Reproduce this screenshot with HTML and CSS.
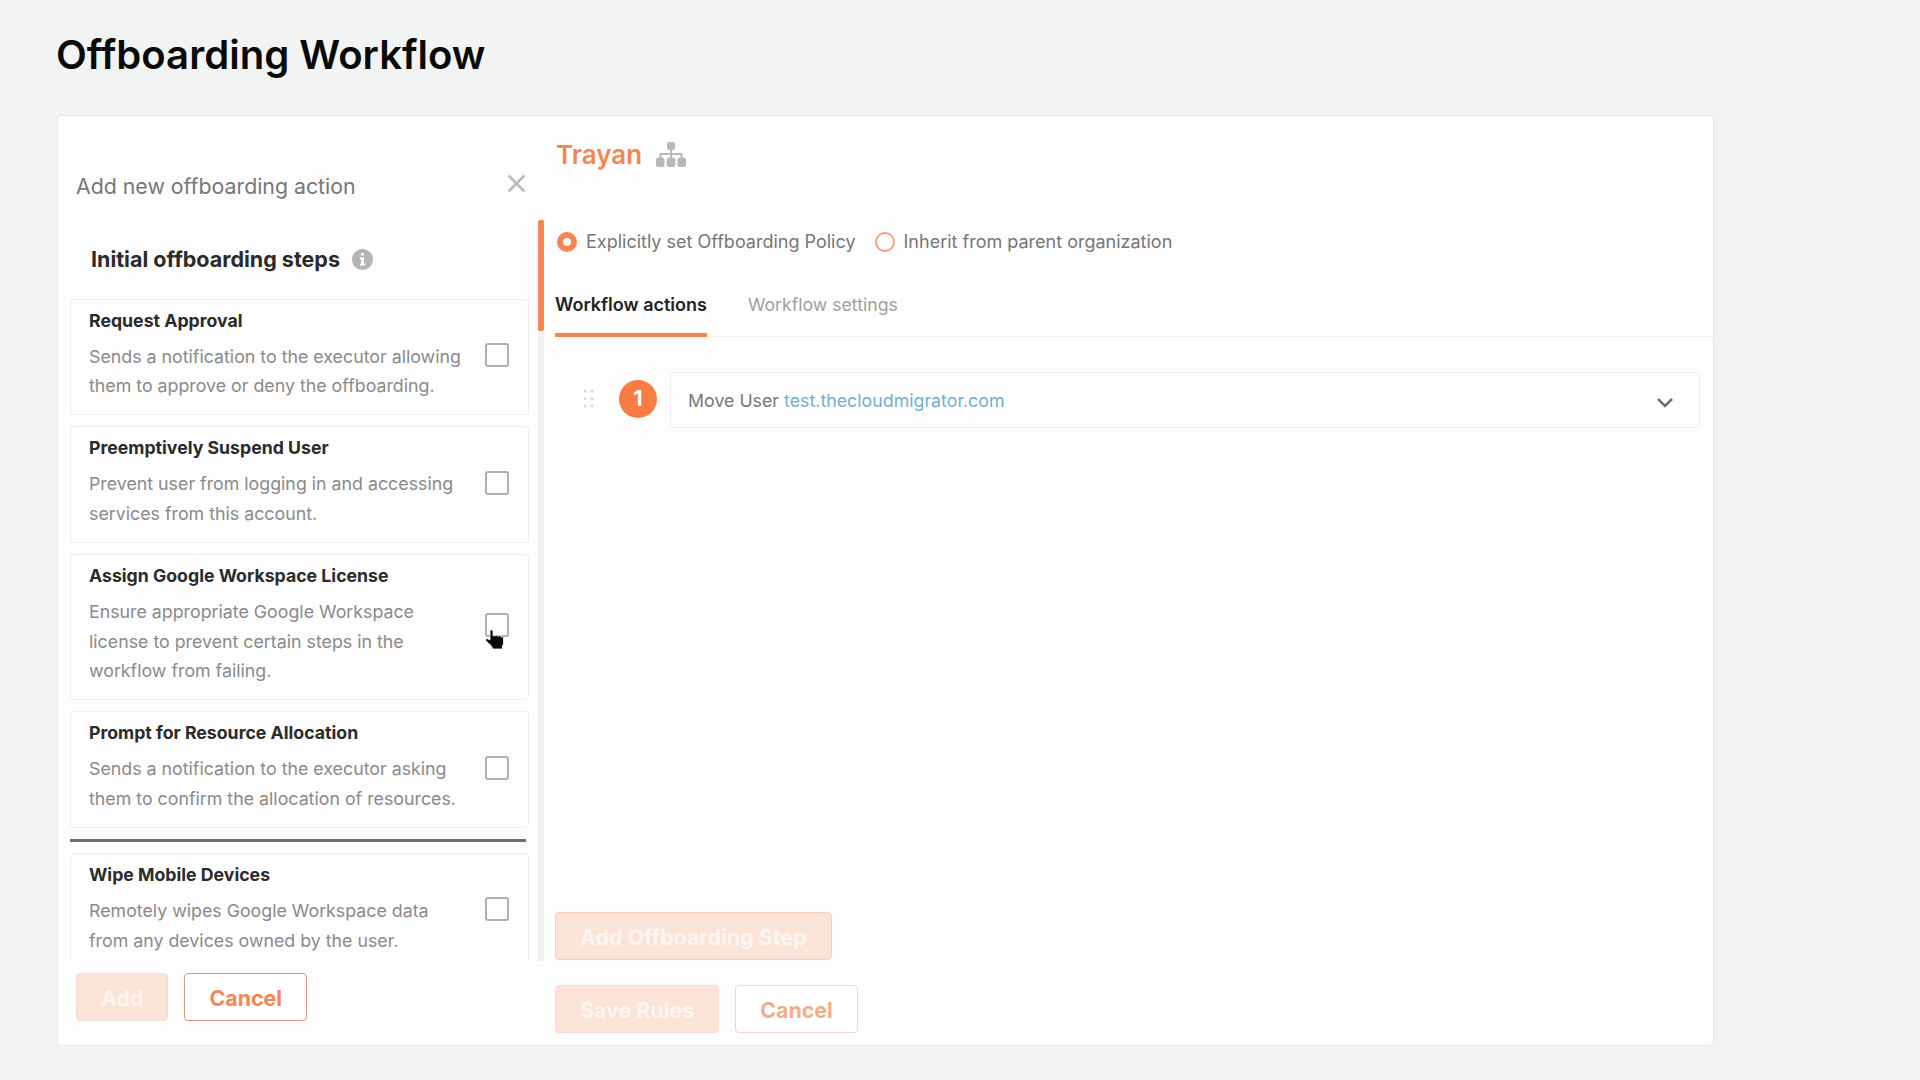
FILE: index.html
```html
<!DOCTYPE html>
<html>
<head>
	<meta charset="utf-8">
	<title>Offboarding Workflow</title>
	<link rel="stylesheet" href="styles.css">
</head>
<body>
	<h1>Offboarding Workflow</h1>
	<div class="card">
		<div class="sidebar">
			<div class="sidebar-head">
				<span>Add new offboarding action</span>
				<svg class="close" viewBox="0 0 18 18"><path d="M1.5 1.5l15 15M16.5 1.5l-15 15"/></svg>
			</div>
			<div class="scroll">
				<div class="steps">
					<h2>
						<span>Initial offboarding steps</span>
						<svg class="info" viewBox="0 0 21 21"><circle cx="10.5" cy="10.5" r="10.5"/><path d="M9 4h3v2.6H9zM8 8.5h4v6h1.2v2H8v-2h1.2v-4H8z"/></svg>
					</h2>
					<div class="step">
						<div class="step-text">
							<h3>Request Approval</h3>
							<p>Sends a notification to the executor allowing<br>them to approve or deny the offboarding.</p>
						</div>
						<span class="checkbox"></span>
					</div>
					<div class="step">
						<div class="step-text">
							<h3>Preemptively Suspend User</h3>
							<p>Prevent user from logging in and accessing<br>services from this account.</p>
						</div>
						<span class="checkbox"></span>
					</div>
					<div class="step">
						<div class="step-text">
							<h3>Assign Google Workspace License</h3>
							<p>Ensure appropriate Google Workspace<br>license to prevent certain steps in the<br>workflow from failing.</p>
						</div>
						<span class="checkbox">
							<svg class="pointer" viewBox="0 0 20 22"><path d="M5 1.5q1.500-1.500 3 0V7l1.800-.8 1.200 1V6l2 0v1.500l1-1 2 .2v1.500l1-.7 1.500 1v6.500L17.500 17v3H8l-2-3.500L1 12q-1-2 1-2.500L5 11z"/></svg>
						</span>
					</div>
					<div class="step">
						<div class="step-text">
							<h3>Prompt for Resource Allocation</h3>
							<p>Sends a notification to the executor asking<br>them to confirm the allocation of resources.</p>
						</div>
						<span class="checkbox"></span>
					</div>
					<div class="divider"></div>
					<div class="step">
						<div class="step-text">
							<h3>Wipe Mobile Devices</h3>
							<p>Remotely wipes Google Workspace data<br>from any devices owned by the user.</p>
						</div>
						<span class="checkbox"></span>
					</div>
				</div>
				<div class="scrollbar"><div class="thumb"></div></div>
			</div>
			<div class="buttons">
				<button class="btn primary">Add</button>
				<button class="btn">Cancel</button>
			</div>
		</div>
		<div class="main">
			<div class="org">
				<span>Trayan</span>
				<svg class="sitemap" viewBox="0 0 30 25"><rect x="11" y="0" width="8" height="8" rx="2"/><rect x="0" y="15.5" width="8.5" height="9.5" rx="2.5"/><rect x="10.75" y="15.5" width="8.5" height="9.5" rx="2.5"/><rect x="21.5" y="15.5" width="8.5" height="9.5" rx="2.5"/><path d="M15 7v10M4.5 17v-5h21v5"/></svg>
			</div>
			<div class="radios">
				<label><i class="radio checked"></i><span>Explicitly set Offboarding Policy</span></label>
				<label><i class="radio"></i><span>Inherit from parent organization</span></label>
			</div>
			<div class="tabs">
				<div class="tab active">Workflow actions</div>
				<div class="tab">Workflow settings</div>
			</div>
			<div class="action-row">
				<svg class="drag" viewBox="0 0 11 19"><circle cx="2" cy="2" r="1.5"/><circle cx="9" cy="2" r="1.5"/><circle cx="2" cy="9.5" r="1.5"/><circle cx="9" cy="9.5" r="1.5"/><circle cx="2" cy="17" r="1.5"/><circle cx="9" cy="17" r="1.5"/></svg>
				<div class="number">1</div>
				<div class="action">
					<div>Move User <a>test.thecloudmigrator.com</a></div>
					<svg class="chevron" viewBox="0 0 18 11"><path d="M2 2l7 7 7-7"/></svg>
				</div>
			</div>
			<div class="footer">
				<button class="btn primary outlined">Add Offboarding Step</button>
				<div class="buttons">
					<button class="btn primary">Save Rules</button>
					<button class="btn faded">Cancel</button>
				</div>
			</div>
		</div>
	</div>
</body>
</html>
```

FILE: styles.css
```css
* {
	box-sizing: border-box;
}
body {
	margin: 0;
	height: 1080px;
	padding: 0 57px;
	overflow: hidden;
	background-color: #F2F4F4;
	font-family: Inter, "Liberation Sans", sans-serif;
	color: #777;
}
h1, h2, h3, p {
	margin: 0;
}
h1 {
	height: 115px;
	margin-left: -1px;
	padding-top: 30px;
	font-size: 40.1px;
	line-height: 49px;
	font-weight: 600;
	color: #0A0A0A;
}
.card {
	display: flex;
	width: 1657px;
	height: 931px;
	background-color: #FDFDFD;
	border: solid 1px #E6E8E8;
	border-radius: 4px;
}
.sidebar {
	width: 486px;
	padding-top: 56px;
}
.sidebar-head {
	display: flex;
	justify-content: space-between;
	height: 48px;
	padding: 0 18px 0 18px;
	font-size: 21.3px;
	line-height: 28px;
}
.close {
	width: 19px;
	height: 19px;
	margin-top: 2px;
	fill: none;
	stroke: #BDBDBD;
	stroke-width: 2.6;
}
.scroll {
	display: flex;
	justify-content: space-between;
	height: 741px;
	overflow: hidden;
}
.steps {
	width: 470px;
	padding-left: 12px;
}
h2 {
	display: flex;
	align-items: center;
	gap: 12px;
	height: 78.6px;
	padding-left: 21px;
	font-size: 21.5px;
	font-weight: 650;
	color: #2B2B2B;
}
.info {
	width: 21px;
	height: 21px;
	fill: #B4B4B4;
}
.info path {
	fill: #FFF;
}
.step {
	display: flex;
	justify-content: space-between;
	align-items: center;
	width: 459px;
	margin-bottom: 11.3px;
	padding: 9px 19px 13px 18px;
	border: solid 1px #EEE;
	border-radius: 4px;
}
h3 {
	height: 33px;
	font-size: 17.7px;
	line-height: 24px;
	font-weight: 700;
	color: #2B2B2B;
	white-space: nowrap;
}
p {
	font-size: 17.8px;
	line-height: 29.7px;
	color: #8A8A8A;
	white-space: nowrap;
}
.checkbox {
	position: relative;
	flex: none;
	width: 24px;
	height: 24px;
	border: solid 2px #B0B0B0;
	border-radius: 3px;
}
.pointer {
	position: absolute;
	left: -2px;
	top: 14px;
	width: 20px;
	height: 22px;
	overflow: visible;
	fill: #0A0A0A;
	stroke: #FDFDFD;
	stroke-width: 0.8;
}
.divider {
	width: 456px;
	height: 3px;
	margin-bottom: 11px;
	background-color: #6E6E6E;
}
.scrollbar {
	width: 6px;
	background-color: #F2F2F2;
}
.thumb {
	height: 111px;
	border-radius: 2px;
	background-color: #F58551;
}
.buttons {
	display: flex;
	gap: 16px;
}
.sidebar .buttons {
	padding: 12px 0 0 18px;
}
.btn {
	height: 48px;
	padding: 1px 24px 0;
	border: solid 1px #D9967A;
	border-radius: 4px;
	background-color: #FFF;
	font-family: inherit;
	font-size: 21.4px;
	font-weight: 700;
	color: #F58551;
}
.primary {
	border-color: #FADDD0;
	background-color: #FBE3D8;
	color: #FDF5F1;
}
.outlined {
	border-color: #F8CDB8;
}
.faded {
	border-color: #F0DACE;
	color: #F4AD8B;
}
.main {
	flex: 1;
	display: flex;
	flex-direction: column;
	padding: 23px 0 12px 11px;
}
.org {
	display: flex;
	gap: 14px;
	height: 90px;
	padding-left: 1px;
	font-size: 26px;
	line-height: 32px;
	font-weight: 600;
	color: #F58551;
}
.sitemap {
	width: 30px;
	height: 25px;
	margin-top: 3px;
	fill: #B8B8B8;
}
.sitemap path {
	fill: none;
	stroke: #B8B8B8;
	stroke-width: 2;
}
.radios {
	display: flex;
	gap: 19px;
	height: 62px;
	padding-left: 2px;
	font-size: 18px;
	line-height: 26px;
}
.radios label {
	display: flex;
	gap: 9px;
}
.radio {
	width: 20px;
	height: 20px;
	margin-top: 3px;
	border: solid 2px #F3A17B;
	border-radius: 50%;
}
.radio.checked {
	border: solid 6px #F58551;
}
.tabs {
	display: flex;
	gap: 41px;
	height: 46px;
	border-bottom: solid 1px #EEE;
	font-size: 17.7px;
	line-height: 28px;
	color: #A0A0A0;
}
.active {
	height: 46px;
	border-bottom: solid 4px #F58551;
	font-size: 18px;
	font-weight: 600;
	color: #222;
}
.action-row {
	display: flex;
	align-items: center;
	margin: 35px 13px 0 28px;
}
.drag {
	width: 11px;
	height: 19px;
	margin-bottom: 3px;
	fill: #D8D8D8;
}
.number {
	width: 38px;
	height: 38px;
	margin: 0 13px 3px 25px;
	border-radius: 50%;
	background-color: #F87C43;
	color: #FFF;
	font-size: 21px;
	line-height: 38px;
	font-weight: 700;
	text-align: center;
}
.action {
	flex: 1;
	display: flex;
	justify-content: space-between;
	align-items: center;
	height: 56px;
	padding: 0 25px 0 17px;
	border: solid 1px #EEE;
	border-radius: 3px;
	font-size: 17.8px;
}
.action a {
	color: #6FB0D2;
}
.chevron {
	width: 18px;
	height: 11px;
	margin-top: 4px;
	fill: none;
	stroke: #707070;
	stroke-width: 2.5;
}
.footer {
	margin-top: auto;
}
.footer .buttons {
	margin-top: 25px;
}
```
